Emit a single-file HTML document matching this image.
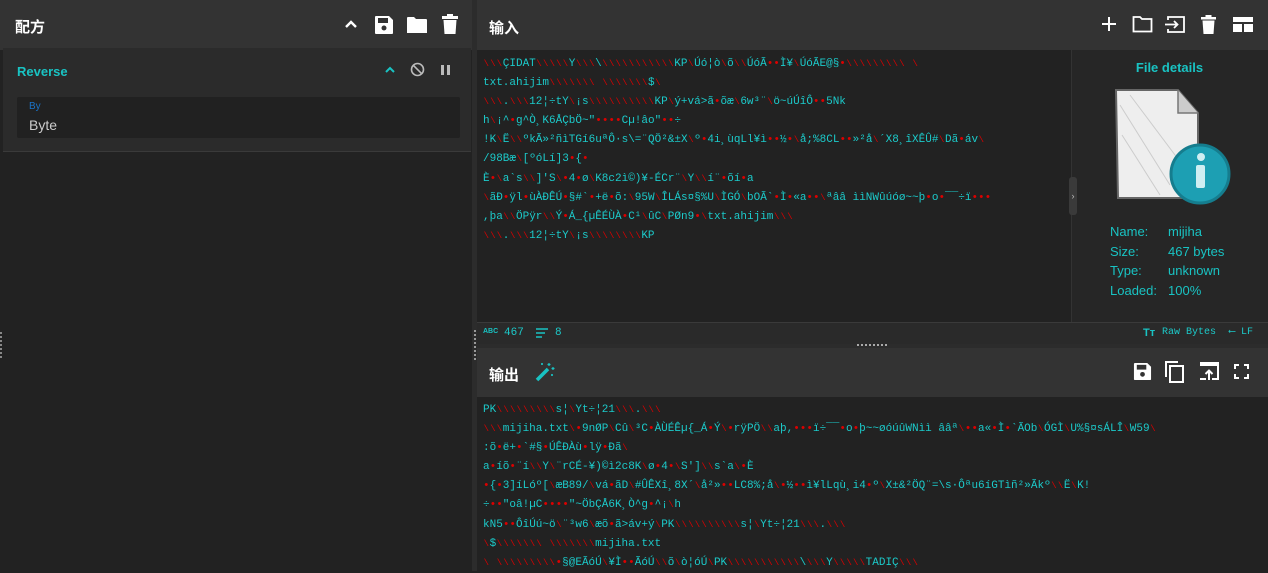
<!DOCTYPE html>
<html><head><meta charset="utf-8"><style>
*{box-sizing:border-box;margin:0;padding:0}
body{width:1268px;height:571px;overflow:hidden;background:#222;font-family:"Liberation Sans","Noto Sans CJK SC",sans-serif;position:relative;color:#fff}
.abs{position:absolute}
.hdr{background:#333;height:50px}
.ttl{font-size:15px;font-weight:bold;color:#fff}
.mono{font-family:"Liberation Mono","DejaVu Sans Mono",monospace;font-size:11px;color:#1ccaca;line-height:19.1px;white-space:pre}
.mono i{font-style:normal;color:#d00;font-size:9px;display:inline-block;width:6.6px;text-align:center}
.mono b{font-weight:normal;color:#d00;display:inline-block;width:6.6px;text-align:center}
svg{position:absolute}
.fd{color:#19c3c3;font-size:13px;line-height:19.5px}
</style></head><body>
<!-- left panel -->
<div class="abs hdr" style="left:0;top:0;width:472px"></div>
<div class="abs ttl" style="left:15px;top:16px">配方</div>
<svg style="left:343px;top:17px" width="16" height="14" viewBox="0 0 16 14"><path d="M3 10 L8 5 L13 10" stroke="#fff" stroke-width="2.4" fill="none"/></svg>
<svg style="left:374px;top:15px" width="20" height="20" viewBox="0 0 20 20"><path d="M1 2 Q1 1 2 1 H15 L19 5 V18 Q19 19 18 19 H2 Q1 19 1 18Z" fill="#fff"/><rect x="4" y="3" width="10" height="5" fill="#333"/><circle cx="10" cy="13" r="2.5" fill="#333"/></svg>
<svg style="left:406px;top:16px" width="22" height="18" viewBox="0 0 22 18"><path d="M1 2 Q1 1 2 1 H8 L10 3 H20 Q21 3 21 4 V17 H1Z" fill="#fff"/></svg>
<svg style="left:442px;top:14px" width="16" height="21" viewBox="0 0 16 21"><rect x="0" y="2" width="16" height="3" fill="#fff"/><rect x="5" y="0" width="6" height="3" fill="#fff"/><path d="M1.5 6 H14.5 L13.5 20 H2.5Z" fill="#fff"/></svg>
<div class="abs" style="left:3px;top:48px;width:468px;height:104px;background:#2b2b2b;border-bottom:1px solid #3a3a3a"></div>
<div class="abs" style="left:17px;top:64px;font-size:13px;font-weight:bold;color:#19c3c3">Reverse</div>
<svg style="left:384px;top:65px" width="12" height="10" viewBox="0 0 12 10"><path d="M2 7 L6 3 L10 7" stroke="#19c3c3" stroke-width="2" fill="none"/></svg>
<svg style="left:410px;top:62px" width="15" height="15" viewBox="0 0 15 15"><circle cx="7.5" cy="7.5" r="6" stroke="#bbb" stroke-width="1.6" fill="none"/><path d="M3.3 3.3 L11.7 11.7" stroke="#bbb" stroke-width="1.6"/></svg>
<div class="abs" style="left:441px;top:65px;width:3px;height:10px;background:#bbb"></div>
<div class="abs" style="left:447px;top:65px;width:3px;height:10px;background:#bbb"></div>
<div class="abs" style="left:17px;top:97px;width:443px;height:41px;background:#212121;border-radius:2px"></div>
<div class="abs" style="left:29px;top:101px;font-size:10px;color:#1a73c8">By</div>
<div class="abs" style="left:29px;top:117px;font-size:14px;color:#ccc">Byte</div>
<div class="abs" style="left:472px;top:0;width:5px;height:571px;background:#2c2c2c"></div>
<div class="abs" style="left:0;top:332px;width:2px;height:26px;border-left:2px dotted #888"></div>
<div class="abs" style="left:474px;top:330px;width:2px;height:30px;border-left:2px dotted #999"></div>
<!-- input -->
<div class="abs hdr" style="left:477px;top:0;width:791px"></div>
<div class="abs ttl" style="left:489px;top:17px">输入</div>
<svg style="left:1101px;top:16px" width="16" height="16" viewBox="0 0 16 16"><path d="M8 1 V15 M1 8 H15" stroke="#fff" stroke-width="2"/></svg>
<svg style="left:1132px;top:15px" width="21" height="18" viewBox="0 0 21 18"><path d="M1.5 2 H8 L10 4 H19.5 V16.5 H1.5Z" stroke="#fff" stroke-width="1.8" fill="none"/></svg>
<svg style="left:1164px;top:15px" width="22" height="19" viewBox="0 0 22 19"><path d="M4 5 V2 H20 V17 H4 V14" stroke="#fff" stroke-width="1.8" fill="none"/><path d="M1 9.5 H13 M10 6 L13.5 9.5 L10 13" stroke="#fff" stroke-width="1.8" fill="none"/></svg>
<svg style="left:1201px;top:15px" width="15" height="19" viewBox="0 0 15 19"><rect x="0" y="2" width="15" height="2.5" fill="#fff"/><rect x="4.5" y="0" width="6" height="3" fill="#fff"/><path d="M1.5 5.5 H13.5 L12.5 19 H2.5Z" fill="#fff"/></svg>
<svg style="left:1233px;top:17px" width="20" height="15" viewBox="0 0 20 15"><rect x="0" y="0" width="20" height="5" fill="#fff"/><rect x="0" y="7" width="9" height="8" fill="#fff"/><rect x="11" y="7" width="9" height="8" fill="#fff"/></svg>
<div class="abs" style="left:477px;top:50px;width:594px;height:272px;background:#222"></div>
<div class="abs" style="left:1071px;top:50px;width:197px;height:272px;background:#262626;border-left:1px solid #333"></div>
<div class="abs" style="left:1069px;top:177px;width:8px;height:38px;background:#3a3a3a;border-radius:3px;font-size:9px;color:#bbb;text-align:center;line-height:38px">›</div>
<div class="abs mono" style="left:483px;top:55px"><i>\</i><i>\</i><i>\</i>ÇIDAT<i>\</i><i>\</i><i>\</i><i>\</i><i>\</i>Y<i>\</i><i>\</i><i>\</i>\<i>\</i><i>\</i><i>\</i><i>\</i><i>\</i><i>\</i><i>\</i><i>\</i><i>\</i><i>\</i><i>\</i>KP<i>\</i>Úó¦ò<i>\</i>õ<i>\</i><i>\</i>ÚóÃ<b>•</b><b>•</b>Ì¥<i>\</i>ÚóÃE@§<b>•</b><i>\</i><i>\</i><i>\</i><i>\</i><i>\</i><i>\</i><i>\</i><i>\</i><i>\</i> <i>\</i>
txt.ahijim<i>\</i><i>\</i><i>\</i><i>\</i><i>\</i><i>\</i><i>\</i> <i>\</i><i>\</i><i>\</i><i>\</i><i>\</i><i>\</i><i>\</i>$<i>\</i>
<i>\</i><i>\</i><i>\</i>.<i>\</i><i>\</i><i>\</i>12¦÷tY<i>\</i>¡s<i>\</i><i>\</i><i>\</i><i>\</i><i>\</i><i>\</i><i>\</i><i>\</i><i>\</i><i>\</i>KP<i>\</i>ý+vá>ã<b>•</b>õæ<i>\</i>6w³¨<i>\</i>ö~úÚîÔ<b>•</b><b>•</b>5Nk
h<i>\</i>¡^<b>•</b>g^Ò¸K6ÅÇbÖ~"<b>•</b><b>•</b><b>•</b><b>•</b>Cµ!âo"<b>•</b><b>•</b>÷
!K<i>\</i>Ë<i>\</i><i>\</i>ºkÃ»²ñìTGí6uªÔ·s\=¨QÖ²&amp;±X<i>\</i>º<b>•</b>4i¸ùqLl¥ì<b>•</b><b>•</b>½<b>•</b><i>\</i>å;%8CL<b>•</b><b>•</b>»²å<i>\</i>´X8¸îXÊÛ#<i>\</i>Dã<b>•</b>áv<i>\</i>
/98Bæ<i>\</i>[ºóLí]3<b>•</b>{<b>•</b>
È<b>•</b><i>\</i>a`s<i>\</i><i>\</i>]'S<i>\</i><b>•</b>4<b>•</b>ø<i>\</i>K8c2ì©)¥-ÉCr¨<i>\</i>Y<i>\</i><i>\</i>í¨<b>•</b>õí<b>•</b>a
<i>\</i>ãÐ<b>•</b>ÿl<b>•</b>ùÀÐÊÚ<b>•</b>§#`<b>•</b>+ë<b>•</b>õ:<i>\</i>95W<i>\</i>ÎLÁs¤§%U<i>\</i>ÌGÓ<i>\</i>bOÃ`<b>•</b>Ì<b>•</b>«a<b>•</b><b>•</b><i>\</i>ªââ ììNWûúóø~~þ<b>•</b>o<b>•</b>¯¯÷ï<b>•</b><b>•</b><b>•</b>
,þa<i>\</i><i>\</i>ÖPÿr<i>\</i><i>\</i>Ý<b>•</b>Á_{µÊÉÙÀ<b>•</b>C¹<i>\</i>ûC<i>\</i>PØn9<b>•</b><i>\</i>txt.ahijim<i>\</i><i>\</i><i>\</i>
<i>\</i><i>\</i><i>\</i>.<i>\</i><i>\</i><i>\</i>12¦÷tY<i>\</i>¡s<i>\</i><i>\</i><i>\</i><i>\</i><i>\</i><i>\</i><i>\</i><i>\</i>KP</div>
<div class="abs" style="left:1071px;top:60px;width:197px;text-align:center;font-size:13px;font-weight:bold;color:#19c3c3">File details</div>
<svg style="left:1110px;top:85px" width="122" height="125" viewBox="0 0 122 125"><path d="M6 5 H68 L88 28 V113 H8Z" fill="#eee" stroke="#666" stroke-width="2"/><path d="M68 5 V28 H88" fill="#ccc" stroke="#777" stroke-width="1.5"/><path d="M10 20 L60 100 M20 10 L80 90 M12 50 L50 110" stroke="#ccc" stroke-width="1"/><circle cx="90" cy="89" r="29" fill="#1d9fb3"/><circle cx="90" cy="89" r="29" fill="none" stroke="#157d8e" stroke-width="3"/><circle cx="91" cy="72" r="4" fill="#cfeef2"/><rect x="86" y="80" width="9" height="23" rx="2" fill="#cfeef2"/></svg>
<div class="abs fd" style="left:1110px;top:222px">Name:<br>Size:<br>Type:<br>Loaded:</div>
<div class="abs fd" style="left:1168px;top:222px">mijiha<br>467 bytes<br>unknown<br>100%</div>
<!-- status bar -->
<div class="abs" style="left:477px;top:322px;width:791px;height:22px;background:#2a2a2a;border-top:1px solid #3a3a3a"></div>
<div class="abs" style="left:483px;top:328px;font-size:7px;font-weight:bold;color:#19c3c3">ABC</div>
<div class="abs mono" style="left:504px;top:323px;line-height:20px">467</div>
<svg style="left:536px;top:328px" width="13" height="10" viewBox="0 0 13 10"><path d="M0 1 H12 M0 5 H9 M0 9 H6" stroke="#19c3c3" stroke-width="1.6"/></svg>
<div class="abs mono" style="left:555px;top:323px;line-height:20px">8</div>
<div class="abs" style="left:1143px;top:327px;font-size:11px;font-weight:bold;color:#19c3c3">Tт</div>
<div class="abs mono" style="left:1162px;top:323px;line-height:20px;font-size:10px">Raw Bytes</div>
<div class="abs mono" style="left:1229px;top:323px;line-height:20px;font-size:10px">⟵ LF</div>
<div class="abs" style="left:477px;top:344px;width:791px;height:4px;background:#2c2c2c"></div>
<div class="abs" style="left:857px;top:344px;width:30px;height:2px;border-top:2px dotted #aaa"></div>
<!-- output -->
<div class="abs" style="left:477px;top:348px;width:791px;height:49px;background:#333"></div>
<div class="abs ttl" style="left:489px;top:364px">输出</div>
<svg style="left:535px;top:362px" width="20" height="20" viewBox="0 0 20 20"><path d="M2 18 L13 7" stroke="#19c3c3" stroke-width="3.5"/><path d="M14 1 v3 M12.5 2.5 h3 M18 5 v3 M16.5 6.5 h3 M7 1 v2 M6 2 h2 M17 12 v2 M16 13 h2" stroke="#19c3c3" stroke-width="1.2"/></svg>
<svg style="left:1133px;top:362px" width="19" height="19" viewBox="0 0 20 20"><path d="M1 2 Q1 1 2 1 H15 L19 5 V18 Q19 19 18 19 H2 Q1 19 1 18Z" fill="#fff"/><rect x="4" y="3" width="10" height="5" fill="#333"/><circle cx="10" cy="13" r="2.5" fill="#333"/></svg>
<svg style="left:1164px;top:360px" width="22" height="23" viewBox="0 0 22 23"><path d="M2 17 V2 H14" stroke="#fff" stroke-width="2" fill="none"/><rect x="6" y="6" width="13" height="16" stroke="#fff" stroke-width="2" fill="none"/></svg>
<svg style="left:1198px;top:361px" width="22" height="20" viewBox="0 0 22 20"><path d="M2 2 H20 V18 H14 M8 18 H2Z" stroke="#fff" stroke-width="2" fill="none"/><rect x="2" y="2" width="18" height="3" fill="#fff"/><path d="M11 19 V10 M7.5 13 L11 9.5 L14.5 13" stroke="#fff" stroke-width="2" fill="none"/></svg>
<svg style="left:1234px;top:364px" width="15" height="15" viewBox="0 0 15 15"><path d="M1 5 V1 H5 M10 1 H14 V5 M14 10 V14 H10 M5 14 H1 V10" stroke="#fff" stroke-width="2" fill="none"/></svg>
<div class="abs" style="left:477px;top:397px;width:791px;height:174px;background:#222"></div>
<div class="abs mono" style="left:483px;top:401px">PK<i>\</i><i>\</i><i>\</i><i>\</i><i>\</i><i>\</i><i>\</i><i>\</i><i>\</i>s¦<i>\</i>Yt÷¦21<i>\</i><i>\</i><i>\</i>.<i>\</i><i>\</i><i>\</i>
<i>\</i><i>\</i><i>\</i>mijiha.txt<i>\</i><b>•</b>9nØP<i>\</i>Cû<i>\</i>³C<b>•</b>ÀÙÉÊµ{_Á<b>•</b>Ý<i>\</i><b>•</b>rÿPÖ<i>\</i><i>\</i>aþ,<b>•</b><b>•</b><b>•</b>ï÷¯¯<b>•</b>o<b>•</b>þ~~øóúûWNìì ââª<i>\</i><b>•</b><b>•</b>a«<b>•</b>Ì<b>•</b>`ÃOb<i>\</i>ÓGÌ<i>\</i>U%§¤sÁLÎ<i>\</i>W59<i>\</i>
:õ<b>•</b>ë+<b>•</b>`#§<b>•</b>ÚÊÐÀù<b>•</b>lÿ<b>•</b>Ðã<i>\</i>
a<b>•</b>íõ<b>•</b>¨í<i>\</i><i>\</i>Y<i>\</i>¨rCÉ-¥)©ì2c8K<i>\</i>ø<b>•</b>4<b>•</b><i>\</i>S']<i>\</i><i>\</i>s`a<i>\</i><b>•</b>È
<b>•</b>{<b>•</b>3]íLóº[<i>\</i>æB89/<i>\</i>vá<b>•</b>ãD<i>\</i>#ÛÊXî¸8X´<i>\</i>å²»<b>•</b><b>•</b>LC8%;å<i>\</i><b>•</b>½<b>•</b><b>•</b>ì¥lLqù¸i4<b>•</b>º<i>\</i>X±&amp;²ÖQ¨=\s·Ôªu6íGTìñ²»Ãkº<i>\</i><i>\</i>Ë<i>\</i>K!
÷<b>•</b><b>•</b>"oâ!µC<b>•</b><b>•</b><b>•</b><b>•</b>"~ÖbÇÅ6K¸Ò^g<b>•</b>^¡<i>\</i>h
kN5<b>•</b><b>•</b>ÔîÚú~ö<i>\</i>¨³w6<i>\</i>æõ<b>•</b>ã>áv+ý<i>\</i>PK<i>\</i><i>\</i><i>\</i><i>\</i><i>\</i><i>\</i><i>\</i><i>\</i><i>\</i><i>\</i>s¦<i>\</i>Yt÷¦21<i>\</i><i>\</i><i>\</i>.<i>\</i><i>\</i><i>\</i>
<i>\</i>$<i>\</i><i>\</i><i>\</i><i>\</i><i>\</i><i>\</i><i>\</i> <i>\</i><i>\</i><i>\</i><i>\</i><i>\</i><i>\</i><i>\</i>mijiha.txt
<i>\</i> <i>\</i><i>\</i><i>\</i><i>\</i><i>\</i><i>\</i><i>\</i><i>\</i><i>\</i><b>•</b>§@EÃóÚ<i>\</i>¥Ì<b>•</b><b>•</b>ÃóÚ<i>\</i><i>\</i>õ<i>\</i>ò¦óÚ<i>\</i>PK<i>\</i><i>\</i><i>\</i><i>\</i><i>\</i><i>\</i><i>\</i><i>\</i><i>\</i><i>\</i><i>\</i>\<i>\</i><i>\</i><i>\</i>Y<i>\</i><i>\</i><i>\</i><i>\</i><i>\</i>TADIÇ<i>\</i><i>\</i><i>\</i></div>
</body></html>
